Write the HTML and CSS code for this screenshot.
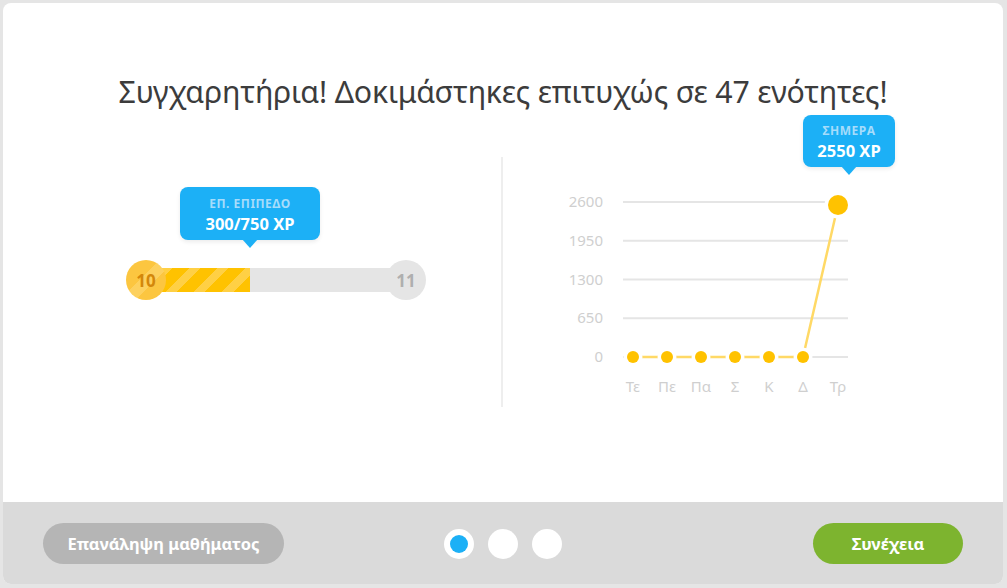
FILE: index.html
```html
<!DOCTYPE html>
<html lang="el">
<head>
<meta charset="utf-8">
<title>Συγχαρητήρια</title>
<link rel="stylesheet" href="styles.css">
</head>
<body>
<div class="card">
  <main class="content">
    <h1 class="title">Συγχαρητήρια! Δοκιμάστηκες επιτυχώς σε 47 ενότητες!</h1>
    <div class="panels">
      <section class="panel level">
        <div class="bar">
          <div class="coin coin-current">10</div>
          <div class="track">
            <div class="fill" style="width: 40%;"></div>
            <div class="tip tip-level" style="left: 40%;">
              <span class="tip-label">ΕΠ. ΕΠΙΠΕΔΟ</span>
              <span class="tip-value">300/750 XP</span>
            </div>
          </div>
          <div class="coin coin-next">11</div>
        </div>
      </section>
      <div class="divider"></div>
      <section class="panel chart">
        <div class="tip tip-today">
          <span class="tip-label">ΣΗΜΕΡΑ</span>
          <span class="tip-value">2550 XP</span>
        </div>
        <svg class="graph" width="500" height="250" viewBox="0 0 500 250">
          <g class="grid">
            <line x1="120" y1="45" x2="345" y2="45"/>
            <line x1="120" y1="83.75" x2="345" y2="83.75"/>
            <line x1="120" y1="122.5" x2="345" y2="122.5"/>
            <line x1="120" y1="161.25" x2="345" y2="161.25"/>
            <line x1="120" y1="200" x2="345" y2="200"/>
          </g>
          <g class="ylab">
            <text x="100" y="50">2600</text>
            <text x="100" y="88.75">1950</text>
            <text x="100" y="127.5">1300</text>
            <text x="100" y="166.25">650</text>
            <text x="100" y="205">0</text>
          </g>
          <polyline class="series" points="130,200 164,200 198,200 232,200 266,200 300,200 335,48"/>
          <g class="dots">
            <circle cx="130" cy="200" r="6"/>
            <circle cx="164" cy="200" r="6"/>
            <circle cx="198" cy="200" r="6"/>
            <circle cx="232" cy="200" r="6"/>
            <circle cx="266" cy="200" r="6"/>
            <circle cx="300" cy="200" r="6"/>
            <circle cx="335" cy="48" r="10"/>
          </g>
          <g class="xlab">
            <text x="130" y="235">Τε</text>
            <text x="164" y="235">Πε</text>
            <text x="198" y="235">Πα</text>
            <text x="232" y="235">Σ</text>
            <text x="266" y="235">Κ</text>
            <text x="300" y="235">Δ</text>
            <text x="335" y="235">Τρ</text>
          </g>
        </svg>
      </section>
    </div>
  </main>
  <footer class="footer">
    <button class="btn btn-review">Επανάληψη μαθήματος</button>
    <div class="pager">
      <span class="pdot active"></span>
      <span class="pdot"></span>
      <span class="pdot"></span>
    </div>
    <button class="btn btn-next">Συνέχεια</button>
  </footer>
</div>
</body>
</html>
```

FILE: styles.css
```css
* { box-sizing: border-box; }

html, body { height: 100%; }

body {
  margin: 0;
  padding: 3px 4px 4px 3px;
  background: #e5e5e5;
  font-family: "Noto Sans", "Open Sans", "DejaVu Sans", sans-serif;
}

.card {
  width: 1000px;
  height: 581px;
  background: #fff;
  border-radius: 8px;
  overflow: hidden;
  display: flex;
  flex-direction: column;
}

.content {
  flex: 1;
  padding-top: 69px;
}

.title {
  margin: 0;
  text-align: center;
  font-size: 30.3px;
  line-height: 40px;
  font-weight: 400;
  color: #3c3c3c;
  letter-spacing: -0.2px;
}

.panels {
  margin-top: 45px;
  display: flex;
  height: 250px;
}

.panel {
  flex: 1;
  position: relative;
}

.divider {
  width: 2px;
  background: #eeeeee;
}

/* level progress */
.level {
  padding-top: 103px;
}

.bar {
  width: 300px;
  margin-left: 123px;
  display: flex;
  align-items: center;
}

.coin {
  width: 40px;
  height: 40px;
  border-radius: 50%;
  flex: none;
  display: flex;
  align-items: center;
  justify-content: center;
  font-size: 17px;
  font-weight: 700;
  position: relative;
  z-index: 1;
}

.coin-current {
  margin-right: -20px;
  color: #d4870a;
  background: linear-gradient(135deg, #fcc640 0%, #fcc640 42%, #fdd15f 42%, #fdd15f 62%, #fcc640 62%);
}

.coin-next {
  margin-left: -20px;
  color: #afafaf;
  background: #e5e5e5;
}

.track {
  flex: 1;
  height: 24px;
  background: #e5e5e5;
  position: relative;
}

.fill {
  height: 100%;
  background: repeating-linear-gradient(
    -45deg,
    #ffc200 0px,
    #ffc200 12px,
    #ffd045 12px,
    #ffd045 20px
  );
}

.tip {
  position: absolute;
  background: #1cb0f6;
  border-radius: 8px;
  color: #fff;
  display: flex;
  flex-direction: column;
  align-items: center;
  justify-content: center;
  gap: 3px;
  box-shadow: 0 2px 4px rgba(0, 0, 0, 0.08);
  z-index: 2;
}

.tip::after {
  content: "";
  position: absolute;
  left: 50%;
  bottom: -8px;
  margin-left: -8px;
  border-left: 8px solid transparent;
  border-right: 8px solid transparent;
  border-top: 9px solid #1cb0f6;
}

.tip-level {
  width: 140px;
  height: 53px;
  bottom: calc(100% + 28px);
  transform: translateX(-50%);
}

.tip-today {
  width: 92px;
  height: 52px;
  left: 300px;
  top: -42px;
}

.tip-label {
  font-size: 12px;
  line-height: 15px;
  font-weight: 700;
  color: #a6dcfb;
  letter-spacing: 0.5px;
  margin-top: 2px;
}

.tip-value {
  font-size: 16.5px;
  line-height: 20px;
  font-weight: 700;
  color: #fff;
}

/* chart */
.graph {
  display: block;
  overflow: visible;
}

.grid line {
  stroke: #e5e5e5;
  stroke-width: 2;
}

.ylab text {
  text-anchor: end;
  font-size: 15px;
  fill: #cfcfcf;
  font-family: "Noto Sans", "Open Sans", sans-serif;
}

.xlab text {
  text-anchor: middle;
  font-size: 15px;
  fill: #cfcfcf;
  font-family: "Noto Sans", "Open Sans", sans-serif;
}

.series {
  fill: none;
  stroke: #ffd966;
  stroke-width: 2.5;
}

.dots circle {
  fill: #ffc200;
  stroke: #fff;
  stroke-width: 7;
  paint-order: stroke;
}

/* footer */
.footer {
  height: 82px;
  flex: none;
  background: #dadada;
  display: grid;
  grid-template-columns: 1fr auto 1fr;
  align-items: center;
  padding: 0 40px;
}

.btn {
  border: 0;
  border-radius: 21px;
  height: 41px;
  color: #fff;
  font-family: inherit;
  font-size: 16.5px;
  font-weight: 700;
  cursor: pointer;
}

.btn-review {
  justify-self: start;
  width: 241px;
  background: #b5b5b5;
}

.btn-next {
  justify-self: end;
  width: 150px;
  background: #7db42f;
}

.pager {
  display: flex;
  gap: 14px;
  margin-top: 2px;
}

.pdot {
  width: 30px;
  height: 30px;
  border-radius: 50%;
  background: #fff;
  display: flex;
  align-items: center;
  justify-content: center;
}

.pdot.active::before {
  content: "";
  width: 18px;
  height: 18px;
  border-radius: 50%;
  background: #1cb0f6;
}
```
